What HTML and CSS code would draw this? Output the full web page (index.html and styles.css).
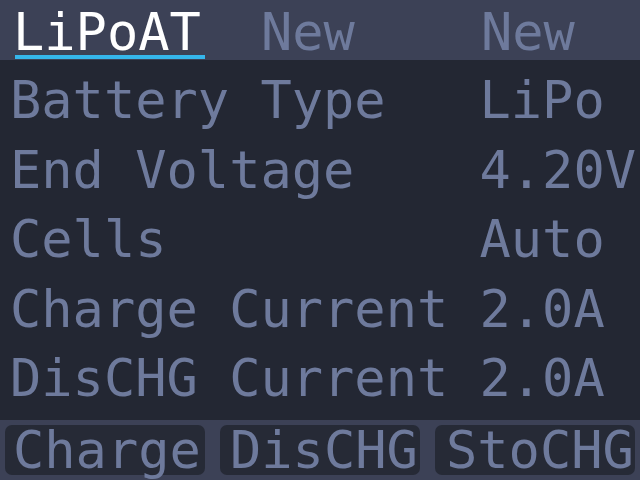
FILE: index.html
```html
<!DOCTYPE html>
<html>
<head>
<meta charset="utf-8">
<link rel="stylesheet" href="styles.css">
</head>
<body>
<div class="screen">
  <div class="tabs">
    <div class="tab tab-active">LiPoAT</div>
    <div class="tab tab-second">New</div>
    <div class="tab">New</div>
  </div>
  <div class="settings">
    <div class="row"><span class="label">Battery Type</span><span class="value">LiPo</span></div>
    <div class="row"><span class="label">End Voltage</span><span class="value">4.20V</span></div>
    <div class="row"><span class="label">Cells</span><span class="value">Auto</span></div>
    <div class="row"><span class="label">Charge Current</span><span class="value">2.0A</span></div>
    <div class="row"><span class="label">DisCHG Current</span><span class="value">2.0A</span></div>
  </div>
  <div class="actions">
    <div class="btn btn-charge">Charge</div>
    <div class="btn btn-dischg">DisCHG</div>
    <div class="btn btn-stochg">StoCHG</div>
  </div>
</div>
</body>
</html>
```
FILE: styles.css
```css
html, body {
  margin: 0;
  padding: 0;
  background: #232733;
}
.screen {
  width: 640px;
  height: 480px;
  display: flex;
  flex-direction: column;
  font-family: "DejaVu Sans Mono", monospace;
  font-size: 52px;
  color: #6e7a9c;
  overflow: hidden;
}
.tabs {
  height: 60px;
  background: #3c4156;
  display: flex;
  padding-left: 15px;
  box-sizing: border-box;
}
.tab {
  padding-top: 9px;
  line-height: 46px;
  white-space: pre;
}
.tab-active {
  color: #ffffff;
  width: 190px;
  text-indent: -2px;
  border-bottom: 4px solid #35b6ec;
  height: 46px;
  margin-right: 56px;
}
.tab-second {
  width: 220px;
}
.settings {
  height: 360px;
  padding: 6px 0 0 10px;
  box-sizing: border-box;
}
.row {
  display: flex;
  line-height: 69.5px;
  white-space: pre;
}
.label {
  width: 469.5px;
}
.actions {
  height: 60px;
  background: #3c4156;
  padding: 5px;
  box-sizing: border-box;
  display: grid;
  grid-template-columns: repeat(3, 200px);
  gap: 15px;
}
.btn {
  background: #262a36;
  border-radius: 7px;
  line-height: 50px;
  white-space: pre;
  overflow: visible;
}
.btn-charge {
  padding-left: 8px;
}
.btn-dischg {
  padding-left: 10px;
}
.btn-stochg {
  padding-left: 11px;
}
```
